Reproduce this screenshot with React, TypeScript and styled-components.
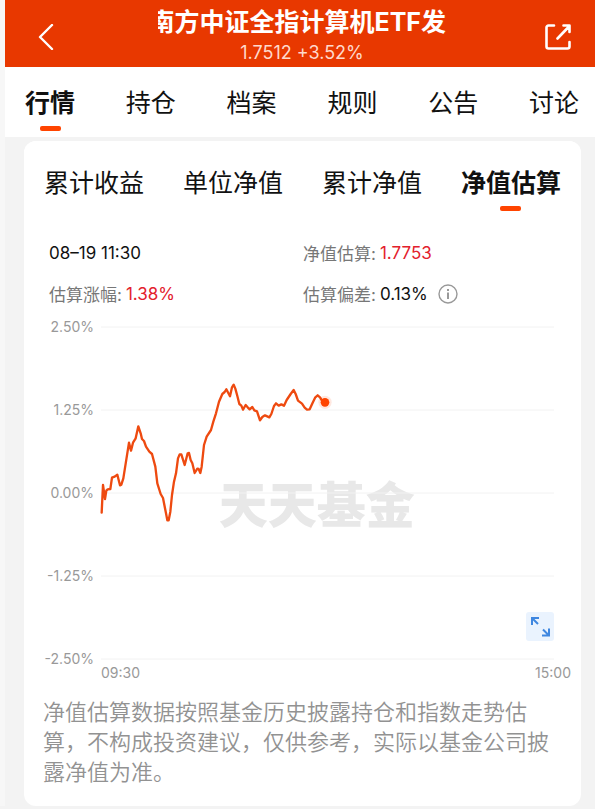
import React, { useState } from "react";
import styled, { createGlobalStyle } from "styled-components";

const GlobalStyle = createGlobalStyle`
  * { box-sizing: border-box; }
  body {
    margin: 0;
    background: #f3f3f3;
    font-family: Inter, "Noto Sans CJK SC", sans-serif;
    color: #111;
  }
  button {
    border: 0;
    padding: 0;
    background: none;
    font: inherit;
    color: inherit;
    cursor: pointer;
  }
  h1, p, dl, dd { margin: 0; }
`;

const Page = styled.div`
  border-left: 5px solid #f7f7f7;
`;

const Header = styled.header`
  display: flex;
  justify-content: space-between;
  align-items: flex-start;
  gap: 16px;
  height: 67px;
  padding: 6px 24px 0 28px;
  background: #e83800;
  color: #fff;
`;

const IconButton = styled.button`
  display: flex;
  margin-top: 18px;
`;

const TitleBlock = styled.div`
  display: flex;
  flex-direction: column;
  align-items: center;
  gap: 4px;
  min-width: 0;
`;

const TitleClip = styled.div`
  display: flex;
  justify-content: flex-end;
  width: 288px;
  max-width: 100%;
  overflow: hidden;
`;

const Title = styled.h1`
  flex: none;
  font-size: 25px;
  line-height: 32px;
  font-weight: 700;
  white-space: nowrap;
`;

const Quote = styled.p`
  font-size: 18px;
  line-height: 22px;
  color: #ffd9cc;
  white-space: nowrap;
`;

const TabBar = styled.nav<{ $inset?: boolean }>`
  display: flex;
  justify-content: space-between;
  padding: ${(p) => (p.$inset ? "24px 20px 0" : "18px 16px 6px 20px")};
  background: #fff;
  border-radius: ${(p) => (p.$inset ? "12px" : "0")};
`;

const TabButton = styled.button<{ $active: boolean }>`
  display: flex;
  flex-direction: column;
  align-items: center;
  gap: 5px;
  font-size: 25px;
  line-height: 36px;
  font-weight: ${(p) => (p.$active ? 700 : 400)};
  white-space: nowrap;

  &::after {
    content: "";
    width: 21px;
    height: 5px;
    border-radius: 2px;
    background: ${(p) => (p.$active ? "#ff4400" : "transparent")};
  }
`;

const Card = styled.main`
  margin: 4px 14px 3px 19px;
  padding-bottom: 19px;
  background: #fff;
  border-radius: 12px;
`;

const Facts = styled.dl`
  display: grid;
  grid-template-columns: 254fr 278fr;
  grid-auto-rows: 41px;
  padding: 21px 0 0 25px;
  font-size: 17px;
`;

const Fact = styled.div`
  display: flex;
  align-items: center;
  gap: 4px;
  white-space: nowrap;
`;

const FactLabel = styled.dt`
  color: #777;
`;

const FactTime = styled.dt`
  color: #111;
`;

const FactValue = styled.dd<{ $rise?: boolean }>`
  color: ${(p) => (p.$rise ? "#e3202c" : "#111")};
`;

const InfoButton = styled.button`
  display: flex;
  margin-left: 6px;
`;

const Chart = styled.section`
  display: grid;
  grid-template-columns: 70px 1fr;
  column-gap: 7px;
  padding-top: 13px;
`;

const AxisY = styled.div`
  display: flex;
  flex-direction: column;
  justify-content: space-between;
  align-items: flex-end;
  margin: -8px 0;
  font-size: 14px;
  line-height: 16px;
  color: #999;
`;

const Plot = styled.div`
  position: relative;
  margin-right: 27px;
`;

const PlotSvg = styled.svg`
  position: relative;
  display: block;
  width: 100%;
  height: auto;
  overflow: visible;
`;

const Watermark = styled.span`
  position: absolute;
  left: 26%;
  top: 43%;
  font-size: 49px;
  line-height: 72px;
  font-weight: 900;
  color: #e8e8e8;
  white-space: nowrap;
`;

const ExpandButton = styled.button`
  position: absolute;
  right: 0;
  bottom: 18px;
  display: flex;
  border-radius: 3px;
  background: #eaf3fe;
`;

const AxisX = styled.div`
  grid-column: 2;
  display: flex;
  justify-content: space-between;
  padding: 6px 10px 0 0;
  font-size: 14px;
  line-height: 16px;
  color: #999;
`;

const Note = styled.p`
  padding: 16px 19px 0 19px;
  font-size: 22px;
  line-height: 30px;
  font-weight: 350;
  color: #929292;
`;

const MAIN_TABS = ["行情", "持仓", "档案", "规则", "公告", "讨论"];
const SUB_TABS = ["累计收益", "单位净值", "累计净值", "净值估算"];
const LEVELS = ["2.50%", "1.25%", "0.00%", "-1.25%", "-2.50%"];

const SERIES: [number, number][] = [
  [2, 557], [6, 474], [12, 516], [16, 491], [20, 487], [28, 486], [33, 452], [41, 449],
  [49, 443], [57, 475], [61, 473], [67, 454], [84, 347], [90, 371], [96, 347], [104, 334],
  [112, 298], [119, 319], [123, 336], [129, 342], [135, 359], [145, 374], [153, 381],
  [163, 419], [169, 469], [179, 501], [186, 513], [195, 559], [199, 580], [203, 580],
  [208, 554], [213, 504], [219, 464], [225, 439], [231, 394], [236, 382], [241, 382],
  [251, 414], [260, 379], [264, 378], [269, 399], [274, 409], [281, 438], [289, 425],
  [293, 426], [298, 438], [302, 419], [309, 354], [317, 329], [330, 309], [337, 284],
  [345, 259], [354, 224], [364, 201], [371, 195], [376, 187], [387, 208], [393, 181],
  [398, 173], [403, 185], [409, 207], [415, 231], [421, 236], [426, 248], [434, 234],
  [440, 241], [446, 247], [454, 240], [460, 250], [468, 253], [477, 280], [484, 270],
  [492, 265], [505, 271], [511, 261], [519, 237], [525, 229], [533, 236], [541, 232],
  [549, 236], [557, 219], [569, 201], [578, 189], [584, 201], [591, 221], [603, 230],
  [611, 242], [618, 248], [626, 247], [635, 227], [643, 211], [650, 205], [657, 211],
  [663, 221], [672, 226],
];

function Tabs({ items, initial, label, inset }: { items: string[]; initial: number; label: string; inset?: boolean }) {
  const [active, setActive] = useState(initial);
  return (
    <TabBar $inset={inset} aria-label={label}>
      {items.map((item, i) => (
        <TabButton key={item} type="button" $active={i === active} aria-pressed={i === active} onClick={() => setActive(i)}>
          {item}
        </TabButton>
      ))}
    </TabBar>
  );
}

function ValueChart() {
  const [endX, endY] = SERIES[SERIES.length - 1];
  return (
    <Chart aria-label="净值估算走势">
      <AxisY>
        {LEVELS.map((level) => (
          <span key={level}>{level}</span>
        ))}
      </AxisY>
      <Plot>
        <Watermark>天天基金</Watermark>
        <PlotSvg viewBox="0 0 1359 996" aria-hidden="true">
          {[0, 249, 498, 747, 996].map((y) => (
            <line key={y} x1="0" x2="1359" y1={y} y2={y} stroke="#f2f2f2" strokeWidth="3" />
          ))}
          <polyline
            points={SERIES.map((p) => p.join(",")).join(" ")}
            fill="none"
            stroke="#ee4a10"
            strokeWidth="7"
            strokeLinejoin="round"
            strokeLinecap="round"
          />
          <circle cx={endX} cy={endY} r="20" fill="#ff4400" opacity="0.12" />
          <circle cx={endX} cy={endY} r="13" fill="#ff4400" />
        </PlotSvg>
        <ExpandButton type="button" aria-label="全屏">
          <svg width="28" height="29" viewBox="0 0 28 29" fill="none" stroke="#3f87e0" strokeWidth="2">
            <path d="M13 6H6v7M6 6l6 6M17 17.500l6 6M16 23.500h7v-7" />
          </svg>
        </ExpandButton>
      </Plot>
      <AxisX>
        <span>09:30</span>
        <span>15:00</span>
      </AxisX>
    </Chart>
  );
}

export default function App() {
  return (
    <Page>
      <GlobalStyle />
      <Header>
        <IconButton type="button" aria-label="返回">
          <svg width="26" height="26" viewBox="0 0 26 26" fill="none" stroke="#fff" strokeWidth="2.4" strokeLinecap="round" strokeLinejoin="round">
            <path d="M19 1L7 13l12 12" />
          </svg>
        </IconButton>
        <TitleBlock>
          <TitleClip>
            <Title>南方中证全指计算机ETF发</Title>
          </TitleClip>
          <Quote>1.7512 +3.52%</Quote>
        </TitleBlock>
        <IconButton type="button" aria-label="分享">
          <svg width="26" height="26" viewBox="0 0 26 26" fill="none" stroke="#fff" strokeWidth="2.6" strokeLinecap="round" strokeLinejoin="round">
            <path d="M9 1.500H3.500a2 2 0 0 0-2 2v19a2 2 0 0 0 2 2h19a2 2 0 0 0 2-2V18M12.500 14.500L24.500 2M18.500 1.500h6v6.500" />
          </svg>
        </IconButton>
      </Header>
      <Tabs items={MAIN_TABS} initial={0} label="基金栏目" />
      <Card>
        <Tabs items={SUB_TABS} initial={3} label="净值图表" inset />
        <Facts>
          <Fact>
            <FactTime>08–19 11:30</FactTime>
          </Fact>
          <Fact>
            <FactLabel>净值估算:</FactLabel>
            <FactValue $rise>1.7753</FactValue>
          </Fact>
          <Fact>
            <FactLabel>估算涨幅:</FactLabel>
            <FactValue $rise>1.38%</FactValue>
          </Fact>
          <Fact>
            <FactLabel>估算偏差:</FactLabel>
            <FactValue>0.13%</FactValue>
            <InfoButton type="button" aria-label="说明">
              <svg width="20" height="20" viewBox="0 0 20 20" fill="none" stroke="#999" strokeWidth="1.400">
                <circle cx="10" cy="10" r="9" />
                <path d="M10 8.500V15M10 5v2" strokeWidth="2" />
              </svg>
            </InfoButton>
          </Fact>
        </Facts>
        <ValueChart />
        <Note>净值估算数据按照基金历史披露持仓和指数走势估算，不构成投资建议，仅供参考，实际以基金公司披露净值为准。</Note>
      </Card>
    </Page>
  );
}
